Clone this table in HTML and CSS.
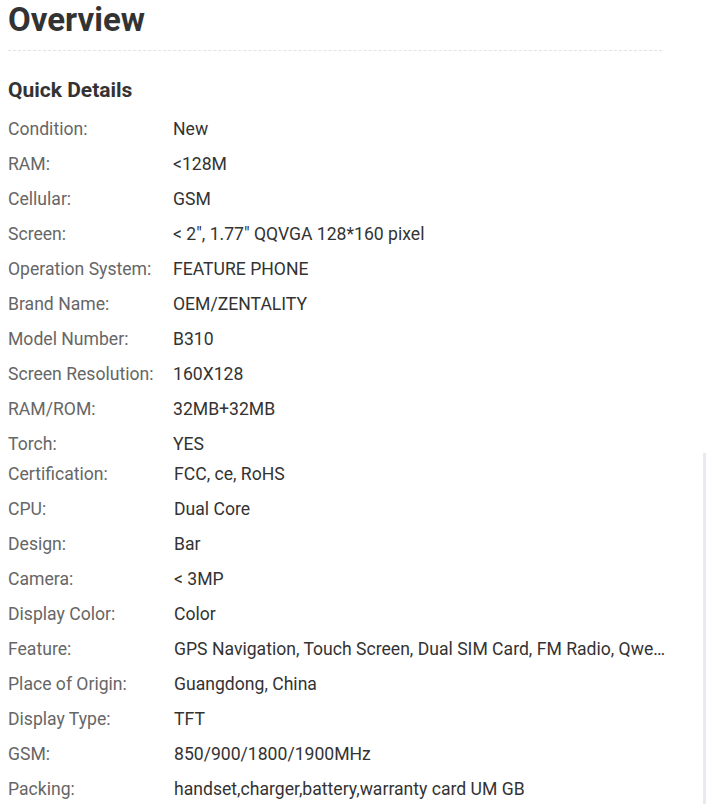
FILE: index.html
```html
<!DOCTYPE html>
<html lang="en">
<head>
<meta charset="utf-8">
<title>Overview</title>
<link rel="stylesheet" href="styles.css">
</head>
<body>
<div class="page">
  <main class="content">
    <h1 class="title">Overview</h1>
    <h2 class="subtitle">Quick Details</h2>
    <dl class="specs">
      <div class="row"><dt>Condition:</dt><dd>New</dd></div>
      <div class="row"><dt>RAM:</dt><dd>&lt;128M</dd></div>
      <div class="row"><dt>Cellular:</dt><dd>GSM</dd></div>
      <div class="row"><dt>Screen:</dt><dd>&lt; 2", 1.77" QQVGA 128*160 pixel</dd></div>
      <div class="row"><dt>Operation System:</dt><dd>FEATURE PHONE</dd></div>
      <div class="row"><dt>Brand Name:</dt><dd>OEM/ZENTALITY</dd></div>
      <div class="row"><dt>Model Number:</dt><dd>B310</dd></div>
      <div class="row"><dt>Screen Resolution:</dt><dd>160X128</dd></div>
      <div class="row"><dt>RAM/ROM:</dt><dd>32MB+32MB</dd></div>
      <div class="row"><dt>Torch:</dt><dd>YES</dd></div>
    </dl>
    <dl class="specs specs-second">
      <div class="row"><dt>Certification:</dt><dd>FCC, ce, RoHS</dd></div>
      <div class="row"><dt>CPU:</dt><dd>Dual Core</dd></div>
      <div class="row"><dt>Design:</dt><dd>Bar</dd></div>
      <div class="row"><dt>Camera:</dt><dd>&lt; 3MP</dd></div>
      <div class="row"><dt>Display Color:</dt><dd>Color</dd></div>
      <div class="row"><dt>Feature:</dt><dd>GPS Navigation, Touch Screen, Dual SIM Card, FM Radio, Qwerty Keyboard</dd></div>
      <div class="row"><dt>Place of Origin:</dt><dd>Guangdong, China</dd></div>
      <div class="row"><dt>Display Type:</dt><dd>TFT</dd></div>
      <div class="row"><dt>GSM:</dt><dd>850/900/1800/1900MHz</dd></div>
      <div class="row"><dt>Packing:</dt><dd>handset,charger,battery,warranty card UM GB</dd></div>
    </dl>
  </main>
  <div class="rail"></div>
</div>
</body>
</html>
```
FILE: styles.css
```css
html, body {
  margin: 0;
  padding: 0;
  background: #ffffff;
}
body {
  font-family: Roboto, "Liberation Sans", Arial, sans-serif;
  color: #333333;
}
.page {
  display: flex;
  align-items: flex-start;
  padding: 0 8px;
  min-height: 804px;
}
.content {
  width: 660px;
  flex: none;
}
.title {
  margin: 0;
  font-size: 33px;
  font-weight: 700;
  line-height: 40px;
  color: #333333;
  padding-bottom: 10px;
  width: 654px;
  border-bottom: 1px dashed #e3e3e3;
}
.subtitle {
  margin: 27px 0 0;
  font-size: 21px;
  font-weight: 700;
  line-height: 24px;
  color: #333333;
}
.specs {
  margin: 10px 0 0;
  padding: 0;
  font-size: 17.6px;
}
.specs .row {
  display: flex;
  height: 35px;
  line-height: 35px;
}
.specs dt {
  flex: none;
  width: 165px;
  color: #666666;
  white-space: nowrap;
}
.specs dd {
  margin: 0;
  flex: 1;
  min-width: 0;
  color: #333333;
  white-space: nowrap;
  overflow: hidden;
  text-overflow: ellipsis;
}
.specs-second {
  margin-top: -5px;
}
.specs-second dt {
  width: 166px;
}
.rail {
  flex: none;
  margin-left: auto;
  margin-top: 453px;
  margin-right: 6px;
  width: 3px;
  height: 351px;
  background: #e8eaf0;
}
```
